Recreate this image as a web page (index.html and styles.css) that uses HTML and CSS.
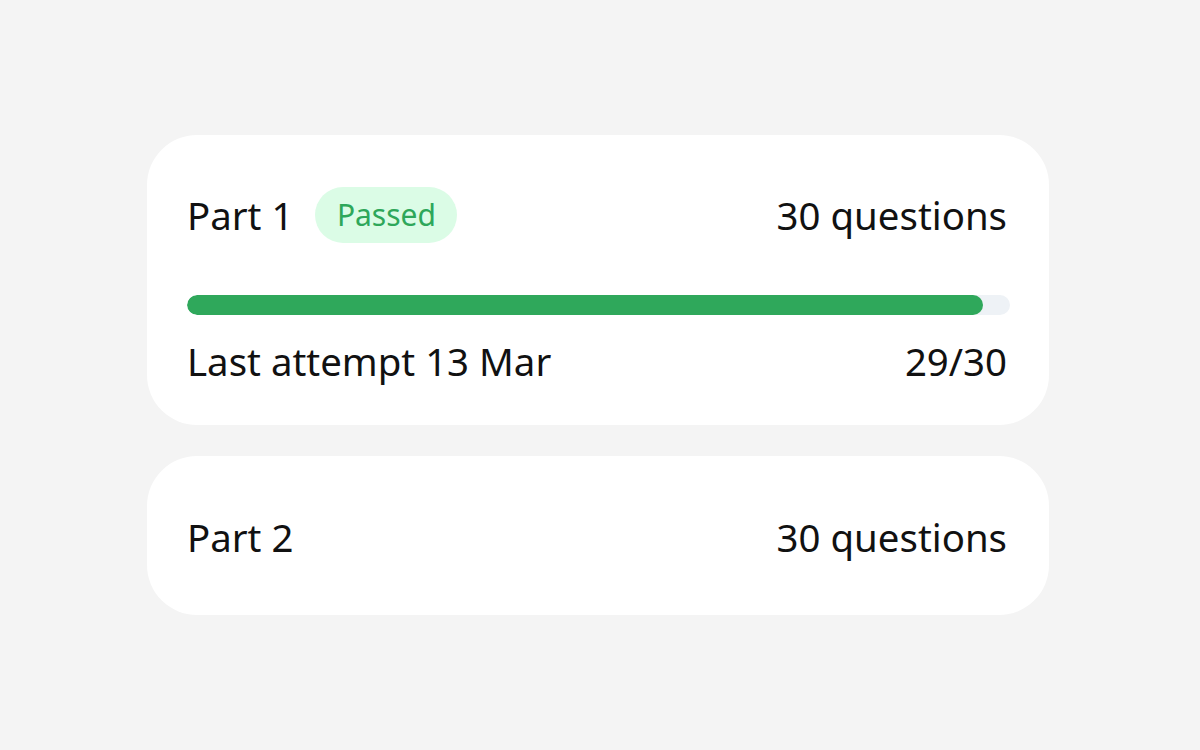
FILE: index.html
```html
<!DOCTYPE html>
<html lang="en">
<head>
<meta charset="utf-8">
<link rel="stylesheet" href="styles.css">
</head>
<body>
<main class="list">
  <section class="card card-main">
    <div class="row">
      <div class="title-group">
        <span class="title">Part 1</span>
        <span class="badge">Passed</span>
      </div>
      <span class="count">30 questions</span>
    </div>
    <div class="track"><div class="fill" style="width: 96.67%"></div></div>
    <div class="row footer">
      <span>Last attempt 13 Mar</span>
      <span>29/30</span>
    </div>
  </section>
  <section class="card card-simple">
    <div class="row">
      <span class="title">Part 2</span>
      <span class="count">30 questions</span>
    </div>
  </section>
</main>
</body>
</html>
```

FILE: styles.css
```css
html, body {
  margin: 0;
  padding: 0;
  background: #f4f4f4;
}
body {
  font-family: "Noto Sans", "Open Sans", sans-serif;
  color: #111111;
  width: 1200px;
  height: 750px;
}
.list {
  display: flex;
  flex-direction: column;
  gap: 31px;
  padding: 135px 0 0 147px;
  width: 902px;
}
.card {
  background: #ffffff;
  border-radius: 50px;
  padding: 0 39px 0 40px;
  font-size: 38.4px;
  line-height: 50px;
}
.card-main {
  padding-top: 52px;
  padding-bottom: 39px;
}
.card-simple {
  padding-top: 56px;
  padding-bottom: 53px;
}
.row {
  display: flex;
  justify-content: space-between;
  align-items: center;
  padding-right: 3px;
}
.title-group {
  display: flex;
  align-items: center;
  gap: 22px;
}
.badge {
  display: inline-flex;
  align-items: center;
  justify-content: center;
  height: 56px;
  width: 142px;
  border-radius: 28px;
  background: #dbfce6;
  color: #2ea75a;
  font-size: 30px;
  line-height: 56px;
}
.track {
  margin-top: 52px;
  height: 20px;
  border-radius: 10px;
  background: #eef2f6;
  overflow: hidden;
}
.fill {
  height: 100%;
  border-radius: 10px;
  background: #2fa85b;
}
.footer {
  margin-top: 21px;
}
```
